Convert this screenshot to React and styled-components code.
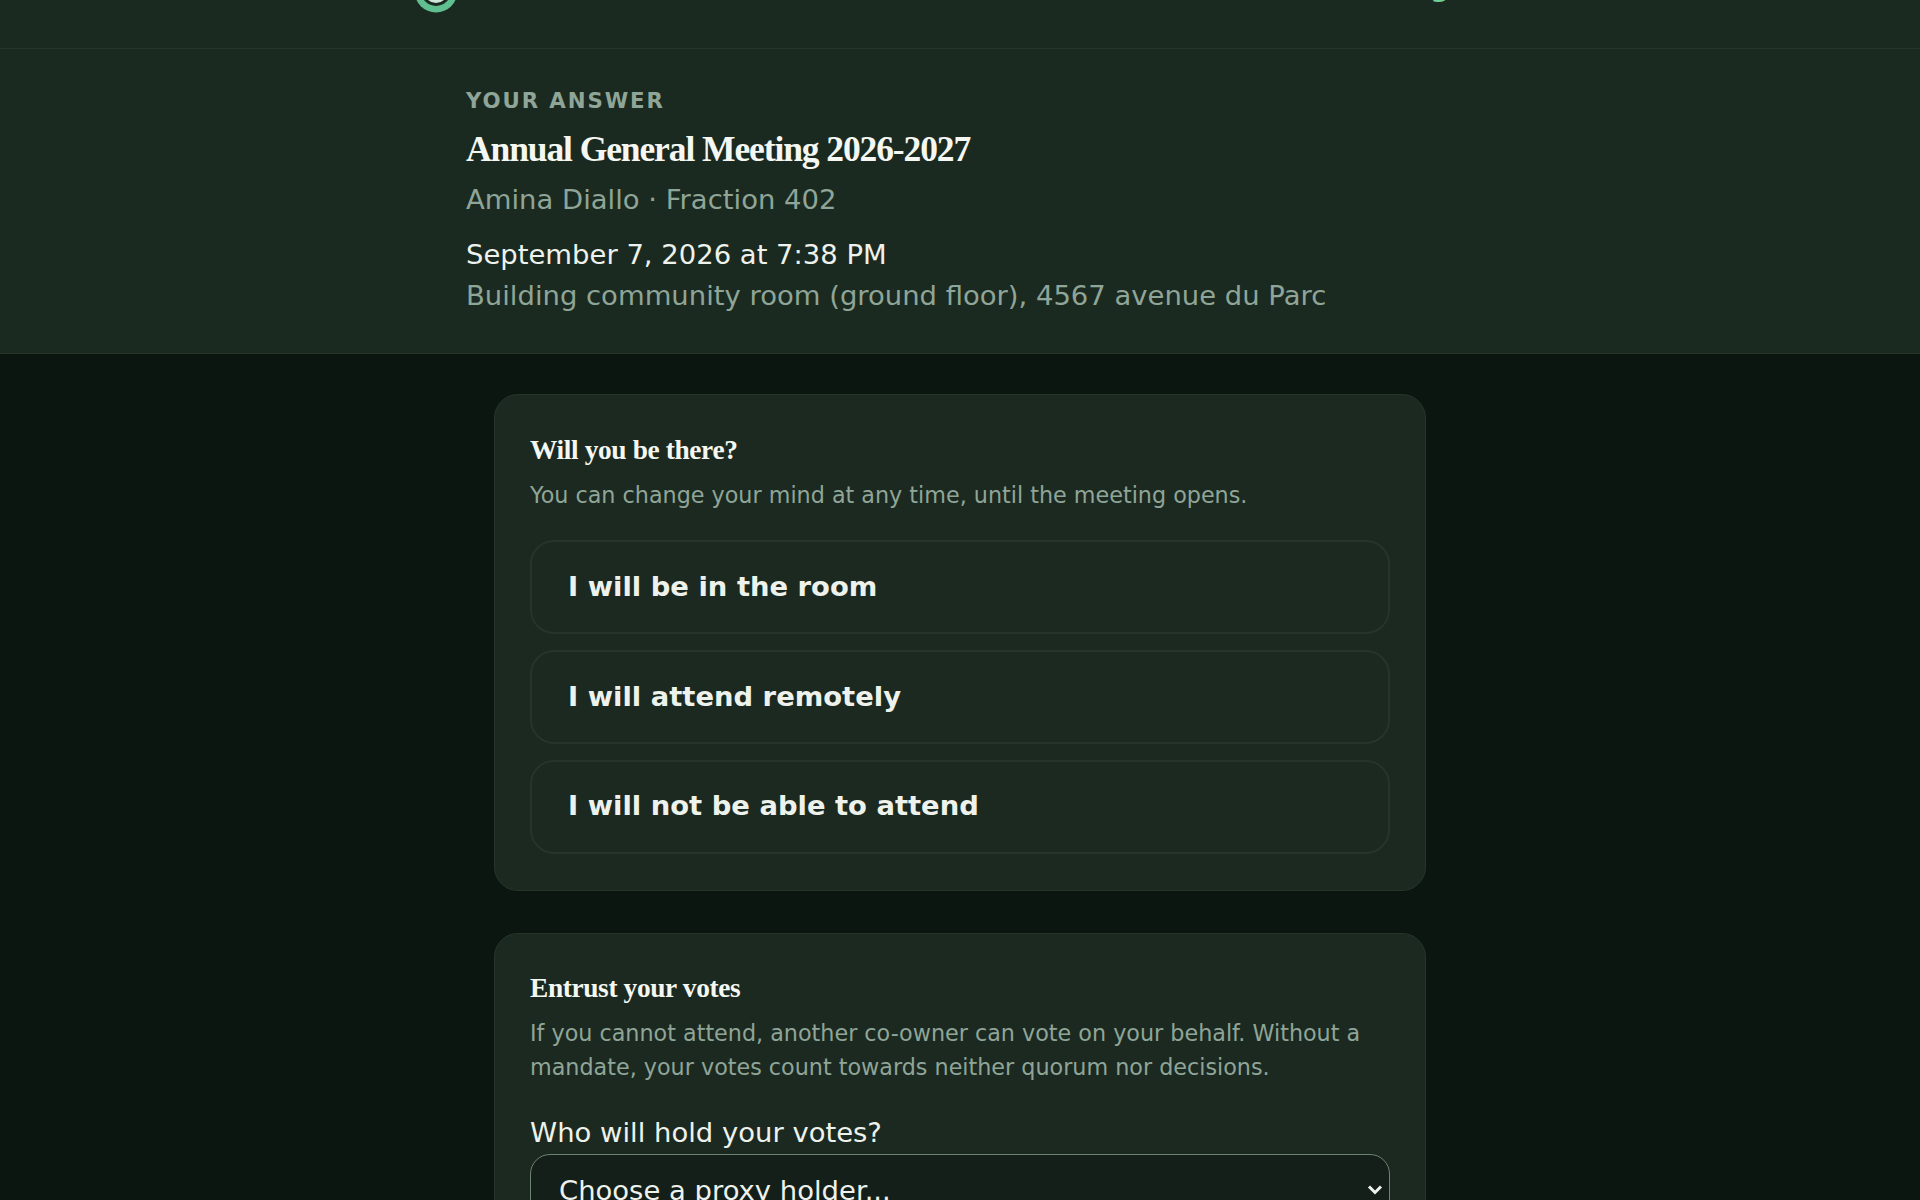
import React from "react";
import styled, { createGlobalStyle } from "styled-components";

const Global = createGlobalStyle`
  html, body { margin: 0; height: 100%; overflow: hidden; background: #0c1611; }
  #root { height: 1200px; overflow: hidden; }
  * { box-sizing: border-box; }
`;
const Page = styled.div`
  font-family: "DejaVu Sans", sans-serif;
  color: #eef2ec;
  background: #0c1611;
  height: 1200px;
  overflow: hidden;
`;
const TopBar = styled.header`
  height: 49px;
  background: #1b2a20;
  border-bottom: 1px solid #263529;
  display: flex;
  justify-content: center;
  overflow: hidden;
`;
const TopInner = styled.div`
  width: 1092px;
  height: 13px;
  display: flex;
  align-items: flex-end;
  justify-content: space-between;
`;
const Logo = styled.svg`
  width: 44px;
  height: 44px;
  flex: none;
`;
const SignOut = styled.span`
  font-size: 27.45px;
  font-weight: 700;
  line-height: 32px;
  white-space: nowrap;
  color: #6fcf97;
  margin-bottom: 10px;
  margin-right: -5px;
`;
const Hero = styled.section`
  background: #1b2a20;
  border-bottom: 1px solid #263529;
  height: 305px;
  padding: 40px 0 0 466px;
`;
const Eyebrow = styled.div`
  font-size: 21.3px;
  line-height: 24px;
  font-weight: 700;
  letter-spacing: 1.9px;
  color: #8fa598;
`;
const Title = styled.h1`
  margin: 14px 0 0;
  font-family: "Liberation Serif", serif;
  font-size: 35.5px;
  line-height: 44px;
  font-weight: 700;
  letter-spacing: -1.1px;
  color: #f4f7f2;
`;
const Muted = styled.p`
  margin: ${(p) => p.$top || 0}px 0 0;
  font-size: 27.45px;
  line-height: 34px;
  color: #8fa598;
`;
const DateLine = styled.p`
  margin: 21px 0 0;
  font-size: 27.45px;
  line-height: 34px;
  color: #eef2ec;
`;
const Main = styled.main`
  width: 932px;
  margin: 40px auto 0;
  display: flex;
  flex-direction: column;
  gap: 42px;
`;
const Card = styled.section`
  background: #1c2920;
  border: 1px solid #263529;
  border-radius: 24px;
  padding: ${(p) => p.$top}px 35px 36px;
`;
const CardTitle = styled.h2`
  margin: 0;
  font-family: "Liberation Serif", serif;
  font-size: 27.4px;
  line-height: 34px;
  font-weight: 700;
  letter-spacing: -0.38px;
  color: #f4f7f2;
`;
const CardText = styled.p`
  margin: 11px 0 0;
  font-size: 22.28px;
  line-height: 34px;
  color: #8fa598;
`;
const Options = styled.div`
  margin-top: 28px;
  display: flex;
  flex-direction: column;
  gap: 15.5px;
`;
const Option = styled.button`
  height: 94.4px;
  padding: 0 0 2px 36px;
  text-align: left;
  background: transparent;
  border: 2px solid #263529;
  border-radius: 24px;
  font-family: inherit;
  font-size: 27.4px;
  font-weight: 700;
  color: #eef2ec;
`;
const FieldLabel = styled.label`
  display: block;
  margin-top: 32px;
  font-size: 27.45px;
  line-height: 34px;
`;
const SelectWrap = styled.div`
  position: relative;
  margin-top: 4px;
`;
const Select = styled.select`
  display: block;
  width: 100%;
  height: 72px;
  padding: 0 28px;
  appearance: none;
  font-family: inherit;
  font-size: 27.45px;
  color: #eef2ec;
  background: #141f19;
  border: 1px solid #6e8273;
  border-radius: 20px;
`;
const Chevron = styled.svg`
  position: absolute;
  right: 7px;
  top: 30px;
  width: 16px;
  height: 11px;
  pointer-events: none;
`;

export default function App() {
  return (
    <Page>
      <Global />
      <TopBar>
        <TopInner>
          <Logo viewBox="0 0 44 44" aria-hidden="true">
            <circle cx="22" cy="22" r="21.5" fill="#5fbf8f" />
            <circle cx="22" cy="22" r="15" fill="#1b2a20" />
            <circle cx="22" cy="22" r="12" fill="#cfe6d8" />
          </Logo>
          <SignOut>Log out</SignOut>
        </TopInner>
      </TopBar>
      <Hero>
        <Eyebrow>YOUR ANSWER</Eyebrow>
        <Title>Annual General Meeting 2026-2027</Title>
        <Muted $top={12}>Amina Diallo · Fraction 402</Muted>
        <DateLine>September 7, 2026 at 7:38 PM</DateLine>
        <Muted $top={7}>Building community room (ground floor), 4567 avenue du Parc</Muted>
      </Hero>
      <Main>
        <Card $top={38}>
          <CardTitle>Will you be there?</CardTitle>
          <CardText>You can change your mind at any time, until the meeting opens.</CardText>
          <Options>
            <Option>I will be in the room</Option>
            <Option>I will attend remotely</Option>
            <Option>I will not be able to attend</Option>
          </Options>
        </Card>
        <Card $top={37}>
          <CardTitle>Entrust your votes</CardTitle>
          <CardText>If you cannot attend, another co-owner can vote on your behalf. Without a mandate, your votes count towards neither quorum nor decisions.</CardText>
          <FieldLabel>Who will hold your votes?</FieldLabel>
          <SelectWrap>
            <Select defaultValue="">
              <option value="">Choose a proxy holder...</option>
            </Select>
            <Chevron viewBox="0 0 16 11" aria-hidden="true">
              <path d="M2 2.5 L8 8.5 L14 2.5" fill="none" stroke="#eef2ec" strokeWidth="3" />
            </Chevron>
          </SelectWrap>
        </Card>
      </Main>
    </Page>
  );
}
